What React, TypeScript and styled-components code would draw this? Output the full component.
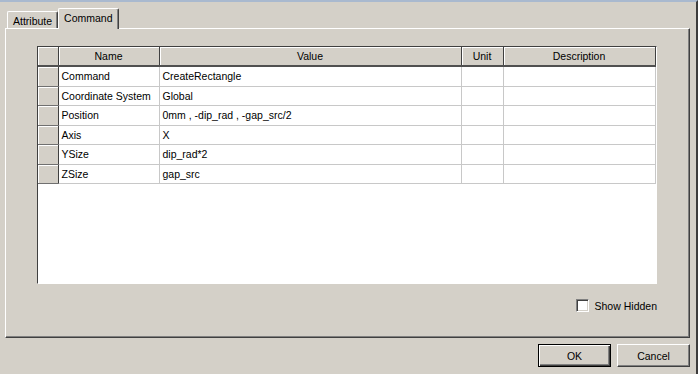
import styled, { createGlobalStyle } from "styled-components";

const GlobalStyle = createGlobalStyle`
  body {
    margin: 0;
    background: #d4d0c8;
    font-family: "Liberation Sans", Arial, sans-serif;
    font-size: 10.5px;
    color: #000;
  }
`;

const Window = styled.div`
  width: 698px;
  height: 374px;
  box-sizing: border-box;
  background: #d4d0c8;
  border-top: 2px solid #a9b9cf;
  border-right: 2px solid #3c3c3c;
  display: flex;
  flex-direction: column;
  padding: 6px 6px 0 5px;
  overflow: hidden;
`;

const TabStrip = styled.div`
  display: flex;
  align-items: flex-end;
  height: 20px;
  padding-left: 2px;
`;

const Tab = styled.div<{ $active?: boolean }>`
  position: relative;
  box-sizing: border-box;
  height: ${(p) => (p.$active ? "21px" : "17px")};
  padding: ${(p) => (p.$active ? "3px 5px 0 5px" : "3px 5px 0 5px")};
  margin-bottom: ${(p) => (p.$active ? "-1px" : "0")};
  background: #d4d0c8;
  border-top: 1px solid #fff;
  border-left: 1px solid #fff;
  border-right: 1px solid #404040;
  box-shadow: inset -1px 0 0 #808080;
  border-radius: 2px 2px 0 0;
  z-index: ${(p) => (p.$active ? 1 : 0)};
  white-space: nowrap;
`;

const Panel = styled.div`
  box-sizing: border-box;
  height: 310px;
  background: #d4d0c8;
  border-top: 1px solid #fff;
  border-left: 1px solid #fff;
  border-right: 1px solid #404040;
  border-bottom: 1px solid #404040;
  box-shadow: inset -1px -1px 0 #808080;
  padding: 17px 32px 0 31px;
  display: flex;
  flex-direction: column;
`;

const GridBox = styled.div`
  box-sizing: border-box;
  height: 238px;
  background: #fff;
  border-top: 1px solid #404040;
  border-left: 1px solid #404040;
  border-right: 1px solid #fff;
  border-bottom: 1px solid #fff;
  overflow: hidden;
`;

const Table = styled.table`
  border-collapse: collapse;
  table-layout: fixed;
  font-size: 10.5px;
`;

const HeadCell = styled.th<{ $w: number }>`
  width: ${(p) => p.$w}px;
  height: 19px;
  box-sizing: border-box;
  padding: 0;
  background: #d4d0c8;
  font-weight: normal;
  text-align: center;
  border-right: 1px solid #404040;
  border-bottom: 2px solid #505050;
  box-shadow: inset 1px 1px 0 #fff;
`;

const RowHead = styled.td`
  height: 18.5px;
  padding: 0;
  background: #d4d0c8;
  border-right: 1px solid #404040;
  border-bottom: 1px solid #707070;
  box-shadow: inset 1px 1px 0 #fff;
`;

const Cell = styled.td`
  height: 18.5px;
  padding: 0 0 0 3px;
  border-right: 1px solid #c8c8c8;
  border-bottom: 1px solid #c8c8c8;
  white-space: nowrap;
  overflow: hidden;
`;

const OptionRow = styled.div`
  display: flex;
  justify-content: flex-end;
  align-items: center;
  gap: 6px;
  margin-top: 15px;
`;

const CheckBox = styled.span`
  width: 13px;
  height: 13px;
  box-sizing: border-box;
  background: #fff;
  border-top: 1px solid #808080;
  border-left: 1px solid #808080;
  border-right: 1px solid #fff;
  border-bottom: 1px solid #fff;
  box-shadow: inset 1px 1px 0 #404040, inset -1px -1px 0 #d4d0c8;
`;

const Footer = styled.div`
  display: flex;
  justify-content: flex-end;
  gap: 6px;
  margin-top: 6px;
`;

const Button = styled.button<{ $default?: boolean }>`
  width: 73px;
  height: 23px;
  box-sizing: border-box;
  background: #d4d0c8;
  font-family: "Liberation Sans", Arial, sans-serif;
  font-size: 10.5px;
  color: #000;
  padding: 0;
  border: 1px solid;
  border-color: ${(p) => (p.$default ? "#000" : "#fff #404040 #404040 #fff")};
  box-shadow: ${(p) =>
    p.$default
      ? "inset 1px 1px 0 #fff, inset -1px -1px 0 #404040, inset -2px -2px 0 #808080"
      : "inset -1px -1px 0 #808080"};
`;

const columns = [
  { name: "", w: 20 },
  { name: "Name", w: 101 },
  { name: "Value", w: 302 },
  { name: "Unit", w: 42 },
  { name: "Description", w: 152 },
];

const rows = [
  ["Command", "CreateRectangle"],
  ["Coordinate System", "Global"],
  ["Position", "0mm , -dip_rad , -gap_src/2"],
  ["Axis", "X"],
  ["YSize", "dip_rad*2"],
  ["ZSize", "gap_src"],
];

export default function App() {
  return (
    <>
      <GlobalStyle />
      <Window>
        <TabStrip>
          <Tab>Attribute</Tab>
          <Tab $active>Command</Tab>
        </TabStrip>
        <Panel>
          <GridBox>
            <Table>
              <thead>
                <tr>
                  {columns.map((c, i) => (
                    <HeadCell key={i} $w={c.w}>
                      {c.name}
                    </HeadCell>
                  ))}
                </tr>
              </thead>
              <tbody>
                {rows.map(([name, value]) => (
                  <tr key={name}>
                    <RowHead />
                    <Cell>{name}</Cell>
                    <Cell>{value}</Cell>
                    <Cell />
                    <Cell />
                  </tr>
                ))}
              </tbody>
            </Table>
          </GridBox>
          <OptionRow>
            <CheckBox />
            <span>Show Hidden</span>
          </OptionRow>
        </Panel>
        <Footer>
          <Button $default>OK</Button>
          <Button>Cancel</Button>
        </Footer>
      </Window>
    </>
  );
}
